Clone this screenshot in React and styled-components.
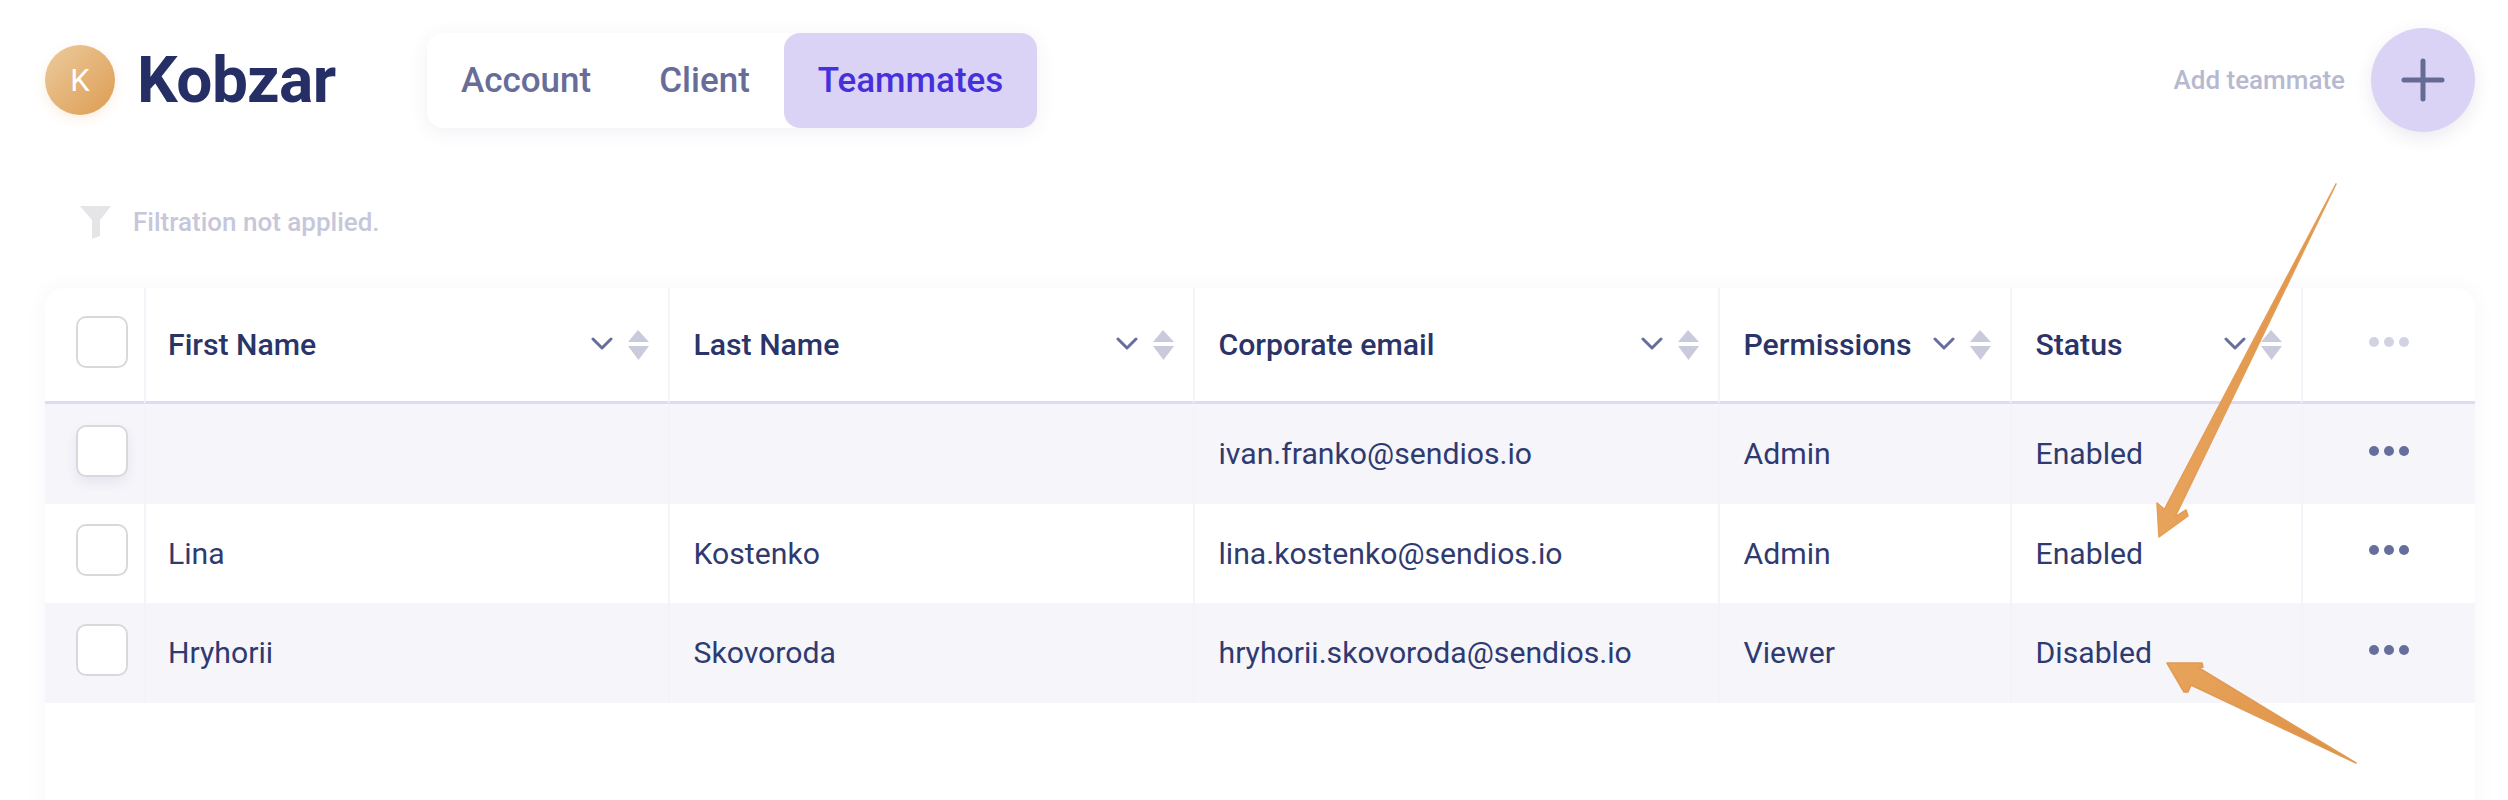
import styled, { createGlobalStyle } from "styled-components";

const GlobalStyle = createGlobalStyle`
  html, body {
    margin: 0;
    background: #fff;
    font-family: Roboto, "Liberation Sans", sans-serif;
  }
`;

const Page = styled.div`
  position: relative;
  height: 800px;
  overflow: hidden;
  padding: 28px 33px 0 45px;
  box-sizing: border-box;
`;

const TopBar = styled.header`
  display: flex;
  align-items: center;
  height: 104px;
`;

const Avatar = styled.div`
  width: 70px;
  height: 70px;
  border-radius: 50%;
  background: linear-gradient(135deg, #eccb9f, #dd9c50);
  box-shadow: 0 4px 12px rgba(224, 160, 90, 0.18);
  color: #fff;
  font-size: 31px;
  display: flex;
  align-items: center;
  justify-content: center;
  margin-right: 22px;
`;

const Brand = styled.h1`
  margin: 0 90px 0 0;
  width: 200px;
  font-size: 64px;
  font-weight: 700;
  color: #252f66;
  letter-spacing: -0.5px;
`;

const Tabs = styled.nav`
  display: flex;
  height: 95px;
  border-radius: 16px;
  background: #fff;
  box-shadow: 0 4px 20px rgba(60, 60, 120, 0.07);
`;

const Tab = styled.div`
  display: flex;
  align-items: center;
  padding: 0 34px;
  border-radius: 16px;
  font-size: 35px;
  font-weight: 500;
  color: ${(props) => (props.$active ? "#4530dc" : "#686d98")};
  background: ${(props) => (props.$active ? "#dbd3f5" : "transparent")};
`;

const AddWrap = styled.div`
  display: flex;
  align-items: center;
  margin-left: auto;
  gap: 26px;
`;

const AddLabel = styled.span`
  font-size: 26px;
  font-weight: 500;
  color: #b7b9d0;
`;

const AddButton = styled.div`
  width: 104px;
  height: 104px;
  border-radius: 50%;
  background: #dbd3f5;
  box-shadow: 0 6px 18px rgba(60, 60, 120, 0.1);
  display: flex;
  align-items: center;
  justify-content: center;
`;

const FilterRow = styled.div`
  display: flex;
  align-items: center;
  height: 34px;
  margin: 73px 0 0 35px;
  gap: 22px;
`;

const FilterText = styled.span`
  font-size: 26px;
  font-weight: 500;
  color: #c6c7da;
`;

const Card = styled.section`
  margin-top: 49px;
  height: 540px;
  border-radius: 20px 20px 0 0;
  background: #fff;
  box-shadow: 0 0 24px rgba(60, 60, 120, 0.04);
  overflow: hidden;
`;

const Row = styled.div`
  display: grid;
  grid-template-columns: 99px 524px 525px 525px 292px 291px 1fr;
  height: ${(props) => (props.$head ? "116px" : "99.5px")};
  background: ${(props) => (props.$shaded ? "#f5f5fa" : "#fff")};
`;

const Cell = styled.div`
  display: flex;
  align-items: center;
  box-sizing: border-box;
  padding: 0 18px 0 23.5px;
  font-size: 30.2px;
  color: #2f3a70;
  border-left: ${(props) => (props.$first ? "none" : "2px solid #f3f3f9")};
  ${(props) => props.$head && "border-bottom: 3px solid #dfdaf6; font-weight: 500; color: #2a3468;"}
`;

const NameCell = styled(Cell)`
  padding-left: 22px;
`;

const BoxCell = styled(Cell)`
  padding: 0 0 6px 31px;
`;

const MenuCell = styled(Cell)`
  padding: 0 0 6px 0;
  justify-content: center;
`;

const Label = styled.span`
  flex: 1;
`;

const Checkbox = styled.div`
  width: 52px;
  height: 52px;
  box-sizing: border-box;
  border: 2px solid #d9d9dd;
  border-radius: 10px;
  background: #fff;
  box-shadow: ${(props) => (props.$raised ? "0 6px 12px rgba(60, 60, 120, 0.08)" : "none")};
`;

const Dots = styled.div`
  display: flex;
  gap: 5px;
`;

const Dot = styled.span`
  width: 10px;
  height: 10px;
  border-radius: 50%;
  background: ${(props) => (props.$muted ? "#d2d3e2" : "#666f9c")};
`;

const ArrowLayer = styled.svg`
  position: absolute;
  left: 0;
  top: 0;
  pointer-events: none;
`;

const columns = ["First Name", "Last Name", "Corporate email", "Permissions", "Status"];

const people = [
  { first: "", last: "", email: "ivan.franko@sendios.io", role: "Admin", status: "Enabled" },
  { first: "Lina", last: "Kostenko", email: "lina.kostenko@sendios.io", role: "Admin", status: "Enabled" },
  { first: "Hryhorii", last: "Skovoroda", email: "hryhorii.skovoroda@sendios.io", role: "Viewer", status: "Disabled" },
];

const SortIcons = () => (
  <svg width="59" height="32" viewBox="0 0 59 32">
    <path d="M2 10l9 9 9-9" fill="none" stroke="#666f9c" strokeWidth="3" strokeLinecap="round" strokeLinejoin="round" />
    <path d="M37 13l10-12 11 12z" fill="#c9cadc" />
    <path d="M37 17l10.500 14 10.500-14z" fill="#c9cadc" />
  </svg>
);

const Menu = ({ muted }) => (
  <Dots>
    <Dot $muted={muted} />
    <Dot $muted={muted} />
    <Dot $muted={muted} />
  </Dots>
);

const App = () => {
  return (
    <Page>
      <GlobalStyle />
      <TopBar>
        <Avatar>K</Avatar>
        <Brand>Kobzar</Brand>
        <Tabs>
          <Tab>Account</Tab>
          <Tab>Client</Tab>
          <Tab $active>Teammates</Tab>
        </Tabs>
        <AddWrap>
          <AddLabel>Add teammate</AddLabel>
          <AddButton>
            <svg width="44" height="44" viewBox="0 0 44 44">
              <path d="M22 3v38M3 22h38" stroke="#666b94" strokeWidth="5" strokeLinecap="round" />
            </svg>
          </AddButton>
        </AddWrap>
      </TopBar>
      <FilterRow>
        <svg width="31" height="33" viewBox="0 0 31 33">
          <path d="M0 0h31l-11 14v16l-8 3V14z" fill="#e5e5e8" />
        </svg>
        <FilterText>Filtration not applied.</FilterText>
      </FilterRow>
      <Card>
        <Row $head>
          <BoxCell $first $head>
            <Checkbox />
          </BoxCell>
          {columns.map((name, i) => {
            const HeadCell = i === 0 ? NameCell : Cell;
            return (
              <HeadCell $head key={name}>
                <Label>{name}</Label>
                <SortIcons />
              </HeadCell>
            );
          })}
          <MenuCell $head>
            <Menu muted />
          </MenuCell>
        </Row>
        {people.map((person, i) => (
          <Row key={person.email} $shaded={i % 2 === 0}>
            <BoxCell $first>
              <Checkbox $raised={i === 0} />
            </BoxCell>
            <NameCell>{person.first}</NameCell>
            <Cell>{person.last}</Cell>
            <Cell>{person.email}</Cell>
            <Cell>{person.role}</Cell>
            <Cell>{person.status}</Cell>
            <MenuCell>
              <Menu />
            </MenuCell>
          </Row>
        ))}
      </Card>
      <ArrowLayer width="2508" height="800" viewBox="0 0 2508 800">
        <defs>
          <linearGradient id="arrowFill" x1="0" y1="0" x2="1" y2="1">
            <stop offset="0" stopColor="#e8a45c" />
            <stop offset="1" stopColor="#dd8f45" />
          </linearGradient>
          <linearGradient id="arrowFillDown" x1="0" y1="0" x2="1" y2="0">
            <stop offset="0" stopColor="#e8a45c" />
            <stop offset="1" stopColor="#df9348" />
          </linearGradient>
        </defs>
        <path
          d="M2336 184L2175 517L2186 510L2188 516L2159 537L2157 503L2163 508L2164 510Z"
          fill="url(#arrowFillDown)"
          stroke="#e59c55"
          strokeWidth="1.500"
          strokeLinejoin="round"
        />
        <path
          d="M2356 763L2191 685L2188 692L2184 692L2167 663L2202 663L2203 667L2199 668Z"
          fill="url(#arrowFill)"
          stroke="#e09a52"
          strokeWidth="1.500"
          strokeLinejoin="round"
        />
      </ArrowLayer>
    </Page>
  );
};

export default App;
